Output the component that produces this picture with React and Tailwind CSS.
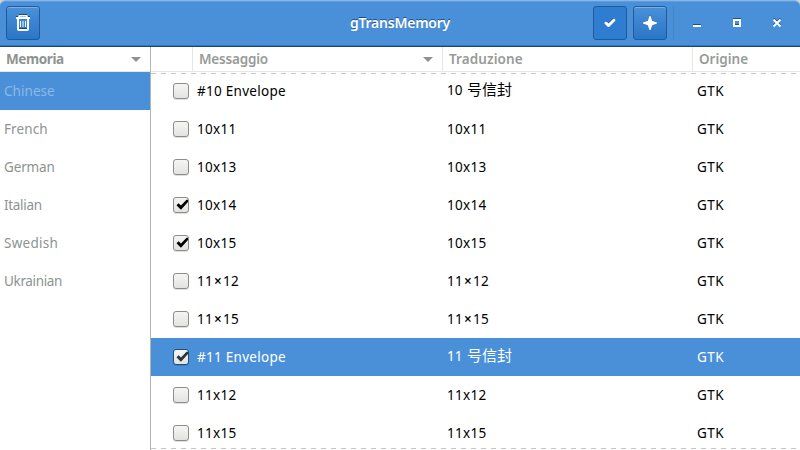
const memories = [
  ["Chinese", "tracking-[0.05px]"],
  ["French", "tracking-[0.1px]"],
  ["German", "tracking-[-0.15px]"],
  ["Italian", "tracking-[-0.3px]"],
  ["Swedish", "tracking-[0.25px]"],
  ["Ukrainian", "tracking-[-0.35px]"],
];

const rows = [
  { text: "#10 Envelope", cjk: ["10", "号信封"] },
  { text: "10x11" },
  { text: "10x13" },
  { text: "10x14", checked: true },
  { text: "10x15", checked: true },
  { text: "11×12" },
  { text: "11×15" },
  { text: "#11 Envelope", cjk: ["11", "号信封"], checked: true, selected: true },
  { text: "11x12" },
  { text: "11x15" },
];

function Trash() {
  return (
    <svg width="16" height="18" viewBox="0 0 16 18" fill="none">
      <path d="M4 0h8v1H4zM1 2h3v1H1zM12 2h3v1h-3zM4 14h8v1H4z" fill="#174a7c" />
      <path d="M5 3h6v1H5z" fill="#174a7c" />
      <path d="M4 1h8l1 2h2v2h-1v10q0 2-2 2H4q-2 0-2-2V5H1V3h2zM4 5v10h8V5zM5 2.500V3h6v-.5z" fill="#fff" fillRule="evenodd" />
      <path d="M5.500 7v6M8 7v6M10.500 7v6" stroke="#fff" strokeWidth="1" />
    </svg>
  );
}

function Caret() {
  return (
    <svg width="10" height="5" viewBox="0 0 10 5">
      <path d="M0 0h10L5 5z" fill="#8d9391" />
    </svg>
  );
}

function Checkbox({ checked, selected }) {
  return (
    <span
      className={`relative block h-4 w-4 shrink-0 rounded-[3px] border bg-linear-to-b from-[#f5f5f4] to-[#e3e3e1] shadow-[0_1px_0_rgba(0,0,0,0.12)] ${
        selected ? "border-[#1d4d80]" : "border-[#8b8e88]"
      }`}
    >
      {checked && (
        <svg className="absolute -top-px -left-px" width="16" height="16" viewBox="0 0 16 16">
          <path d="M3.500 8.200 5.500 6.300 8 8.600 13.500 2.800H15V5L8.200 12.400H7.600z" fill={selected ? "#2e3436" : "#000"} />
        </svg>
      )}
    </span>
  );
}

function Label({ text }) {
  if (text.includes("×")) {
    const [a, b] = text.split("×");
    return (
      <span className="tracking-[0.28px]">
        {a}
        <span className="inline-block w-[10px] text-center font-semibold">×</span>
        {b}
      </span>
    );
  }
  return <span className="tracking-[0.28px]">{text}</span>;
}

function TitleBar() {
  return (
    <header className="flex h-[47px] shrink-0 items-start rounded-t-md border-t border-b border-t-[#89b6e5] border-b-[#184776] bg-[#4a90d9] pt-[5px] pl-1.5 shadow-[inset_0_-1px_0_#3477bb,inset_0_1px_0_#5c9cdf]">
      <button className="flex h-[34px] w-[34px] items-center justify-center rounded-[3px] border border-[#1f5b99] bg-linear-to-b from-[#4a90d9] to-[#2a76c6] shadow-[inset_0_1px_0_#7db0e6]">
        <Trash />
      </button>
      <h1 className="ml-[310px] w-[243px] pt-[7px] text-[14px] leading-5 font-semibold whitespace-nowrap text-white [text-shadow:0_-1px_#1c5187]">
        <span className="tracking-[-0.24px]">gTransMemory</span>
      </h1>
      <button className="flex h-[34px] w-[34px] items-center justify-center rounded-[3px] border border-[#1f5b99] bg-[#2f7dd1]">
        <svg width="12" height="10" viewBox="0 0 12 10" fill="none">
          <path d="M1.500 4.500 4.300 7.300 10 1.700" stroke="#1c5187" strokeWidth="2.500" transform="translate(0 -1)" />
          <path d="M2 5 4.500 7.500 9.800 2.200" stroke="#fff" strokeWidth="3" strokeLinecap="round" strokeLinejoin="round" />
        </svg>
      </button>
      <button className="ml-1.5 flex h-[34px] w-[34px] items-center justify-center rounded-[3px] border border-[#1f5b99] bg-linear-to-b from-[#4a90d9] to-[#2a76c6] shadow-[inset_0_1px_0_#7db0e6]">
        <svg width="16" height="16" viewBox="0 0 16 16">
          <path d="M8 0 10.200 5.200 15 7.500 10.200 9.800 8 15 5.800 9.800 1 7.500 5.800 5.200z" fill="#1c5187" />
          <path d="M7.500 1h1L10.200 5.800 15 7.500v1L10.200 10.200 8.500 15h-1L5.800 10.200 1 8.500v-1L5.800 5.800z" fill="#fff" />
        </svg>
      </button>
      <span className="ml-1.5 h-[34px] w-px bg-[#4384c8]" />
      <div className="ml-[17px] flex gap-[28px] pt-[10px]">
        <svg width="12" height="14" viewBox="0 0 12 14">
          <path d="M2 8h8v1H2z" fill="#1c5187" />
          <path d="M2 9h8v2H2z" fill="#fff" />
        </svg>
        <svg width="12" height="14" viewBox="0 0 12 14" fill="none">
          <path d="M2 2h8v1H2zM4 8h4v1H4z" fill="#1c5187" />
          <path d="M3 4h6v6H3z" stroke="#fff" strokeWidth="2" />
        </svg>
        <svg width="12" height="14" viewBox="0 0 12 14" fill="none">
          <path d="m2.500 2.500 7 7m0-7-7 7" stroke="#1c5187" strokeWidth="2" />
          <path d="m2.500 3.500 7 7m0-7-7 7" stroke="#fff" strokeWidth="2" />
        </svg>
      </div>
    </header>
  );
}

export default function App() {
  return (
    <div className="h-[450px] w-[800px] overflow-hidden bg-[#d2d2cf] font-['Noto_Sans','Noto_Sans_CJK_SC',sans-serif] text-[13.5px] text-black">
      <div className="flex h-full flex-col">
        <TitleBar />
        <main className="flex min-h-0 flex-1 bg-white">
          <aside className="w-[151px] shrink-0 border-r border-[#b3b5b2] text-[#8d9391]">
            <div className="flex h-[25px] items-center justify-between border-b border-[#e5e6e5] pr-[9px] pl-1.5 text-[13.5px] font-bold">
              <span className="tracking-[-0.4px]">Memoria</span>
              <Caret />
            </div>
            {memories.map(([name, tracking], i) => (
              <div key={name} className={`flex h-[38px] items-center pl-1 ${i === 0 ? "bg-[#4a90d9] text-[#8bb8e7]" : ""}`}>
                <span className={tracking}>{name}</span>
              </div>
            ))}
          </aside>
          <section className="relative min-w-0 flex-1 overflow-hidden">
            <div className="flex h-[25px] border-b border-[#e5e6e5] text-[13.5px] font-semibold text-[#969b98]">
              <div className="w-[42px] shrink-0 border-r border-[#e5e6e5]" />
              <div className="flex w-[250px] shrink-0 items-center justify-between border-r border-[#e5e6e5] pr-[9px] pl-1.5">
                <span className="tracking-[-0.2px]">Messaggio</span>
                <Caret />
              </div>
              <div className="flex w-[250px] shrink-0 items-center border-r border-[#e5e6e5] pl-1.5 tracking-[0.1px]">Traduzione</div>
              <div className="flex items-center pl-1.5">Origine</div>
            </div>
            {rows.map((row, i) => (
              <div key={i} className={`flex h-[38px] items-center pl-[22px] ${row.selected ? "bg-[#4a90d9] text-white" : ""}`}>
                <Checkbox checked={row.checked} selected={row.selected} />
                <span className="ml-2 w-[250px] shrink-0">
                  <Label text={row.text} />
                </span>
                <span className="w-[250px] shrink-0">
                  {row.cjk ? (
                    <span className="flex items-center pb-0.5 leading-5">
                      <span className="w-5 tracking-[0.1px]">{row.cjk[0]}</span>
                      <span className="pb-0.5 text-[15px]">{row.cjk[1]}</span>
                    </span>
                  ) : (
                    <Label text={row.text} />
                  )}
                </span>
                <span className="tracking-[0.4px]">GTK</span>
              </div>
            ))}
            <span className="absolute inset-x-0 top-[26px] h-px bg-[repeating-linear-gradient(90deg,#c4c6c3_0_5px,transparent_5px_10px)]" />
            <span className="absolute inset-x-0 top-[401px] h-px bg-[repeating-linear-gradient(90deg,#c4c6c3_0_5px,transparent_5px_10px)]" />
          </section>
        </main>
      </div>
    </div>
  );
}
